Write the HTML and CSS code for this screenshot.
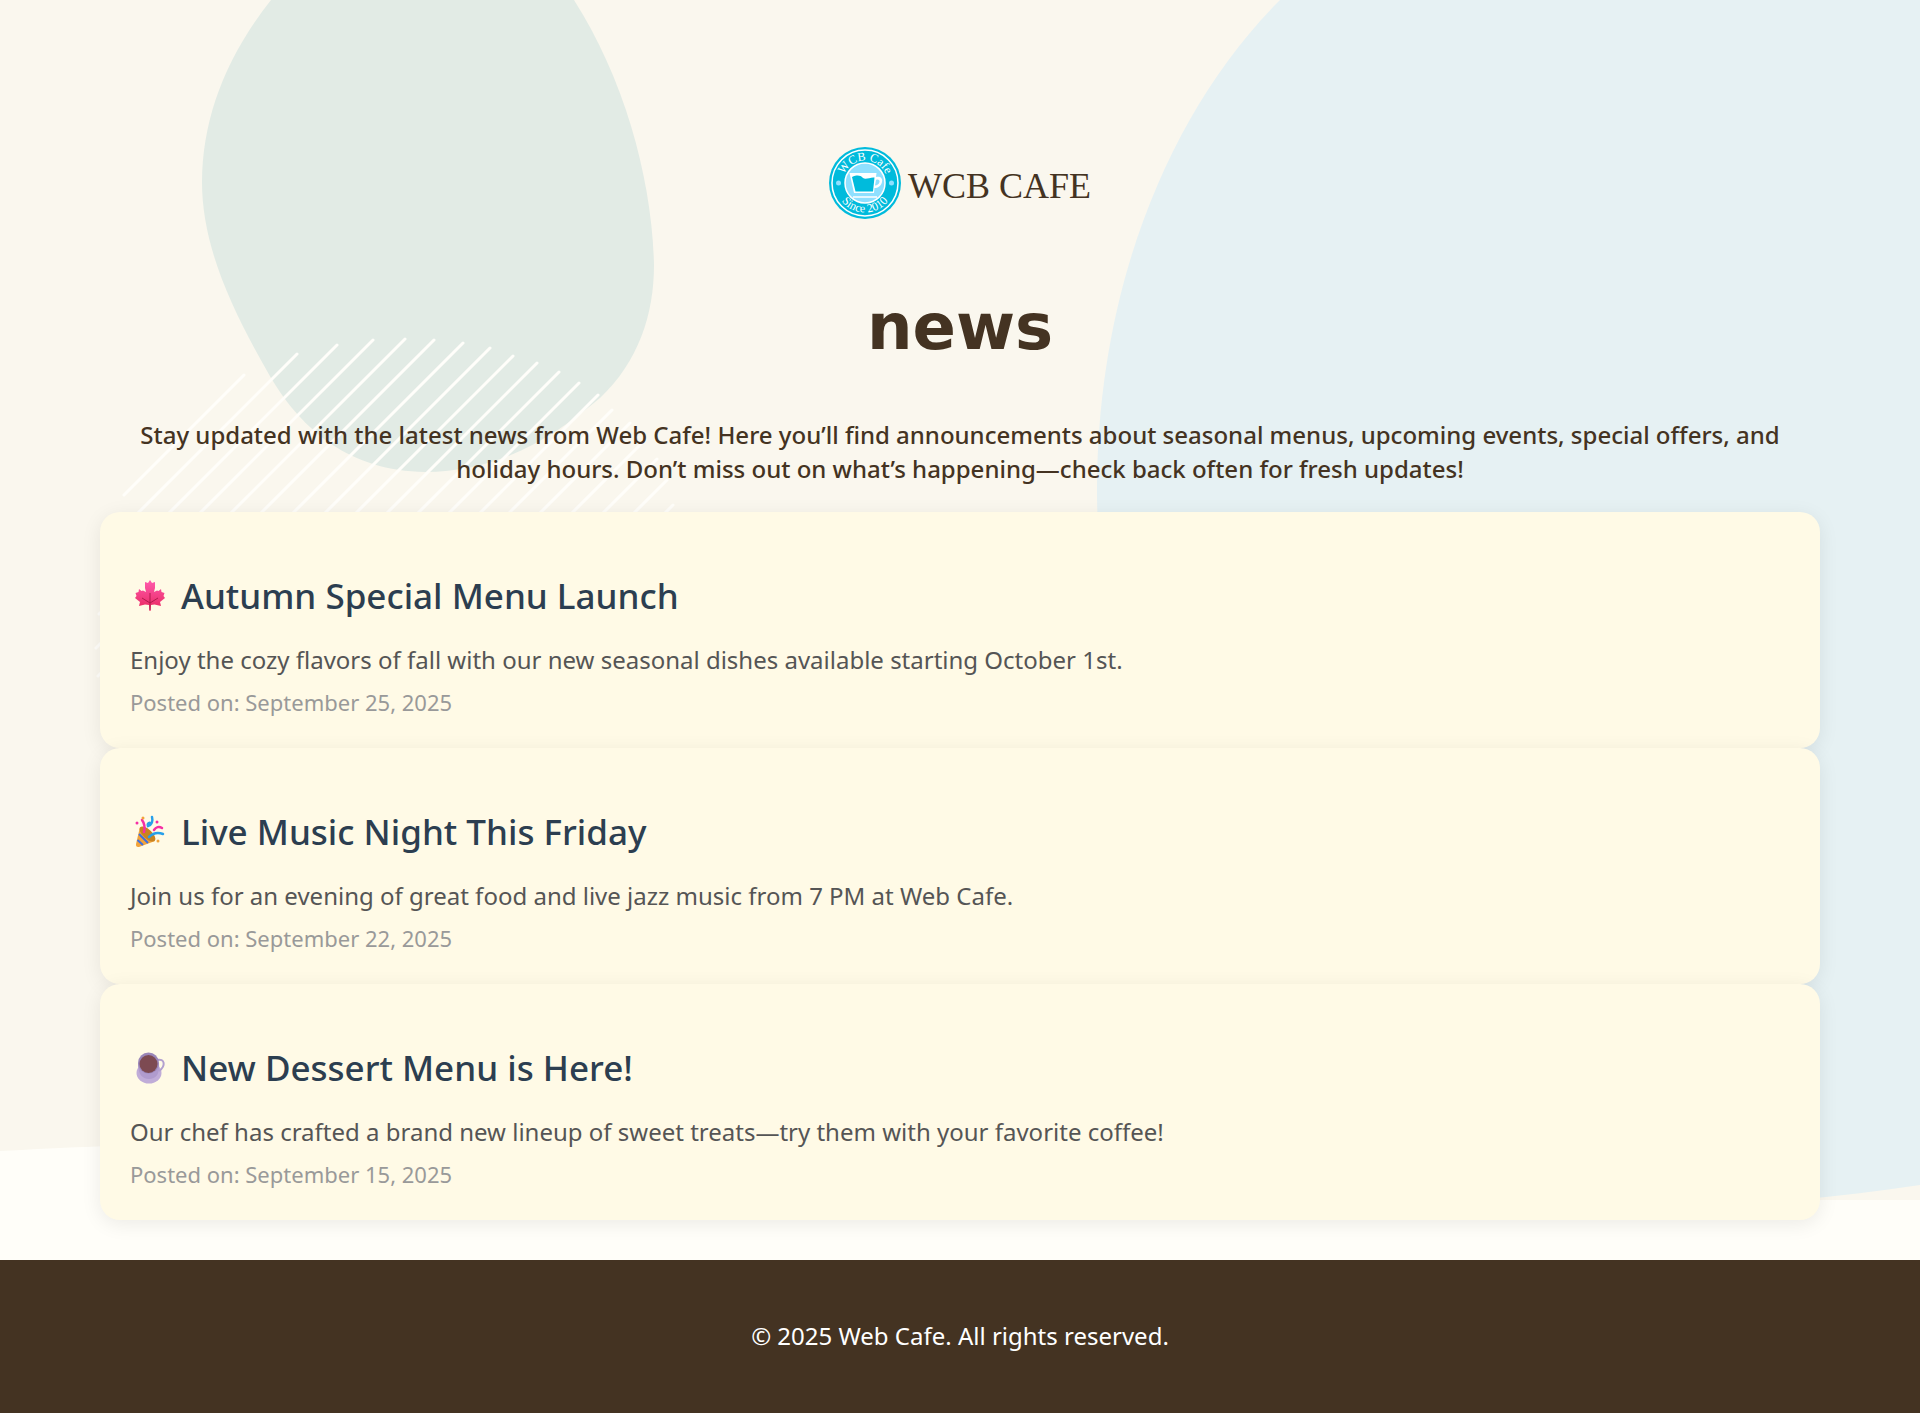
FILE: index.html
```html
<!DOCTYPE html>
<html lang="en">
<head>
<meta charset="utf-8">
<meta name="viewport" content="width=device-width, initial-scale=1">
<title>News | WCB Cafe</title>
<link rel="stylesheet" href="styles.css">
</head>
<body>
<svg class="backdrop" viewBox="0 0 1920 1200" preserveAspectRatio="xMidYMin slice" aria-hidden="true">
  <rect width="1920" height="1200" fill="#faf7ee"/>
  <path fill="#e6f1f3" d="M1280 0C1168 112 1097 290 1097 490C1097 800 1300 1200 1700 1204C1790 1203 1850 1195 1920 1185V0Z"/>
  <path fill="#e2ebe5" d="M271 0C225 58 202 120 202 182C202 250 235 315 271 378C302 430 350 471 425 472C500 472 555 436 600 398C638 362 654 315 654 265C652 180 625 80 574 0Z"/>
  <path fill="none" stroke="#fffefa" stroke-width="3" stroke-linecap="round" d="M244 375L124 495M297 354L110 541M337 345L102 580M373 340L99 614M405 339L96 648M434 340L98 676M463 343L110 696M490 348L130 708M513 356L150 719M537 363L170 730M559 372L190 741M579 383L210 752M598 395L235 758M612 410L262 760M630 423L300 753M645 440L340 745M657 459L380 736M667 480L420 727M673 505L460 718"/>
  <path fill="#fffef9" d="M0 1151C60 1148 110 1145 180 1145C500 1145 900 1200 1200 1200H0Z"/>
</svg>

<header class="site-header">
  <a class="logo" href="#" aria-label="WCB Cafe home">
    <svg class="logo-mark" viewBox="0 0 72 72" aria-hidden="true">
      <defs>
        <path id="arc-top" d="M13.500 36A22.500 22.500 0 0 1 58.500 36"/>
        <path id="arc-bottom" d="M6.500 36A29.500 29.500 0 0 0 65.500 36"/>
      </defs>
      <circle cx="36" cy="36" r="36" fill="#00bbdc"/>
      <circle cx="36" cy="36" r="33" fill="none" stroke="#fff" stroke-width="1.500"/>
      <circle cx="36" cy="36" r="20" fill="#8fe0ff" stroke="#fff" stroke-width="1.500"/>
      <circle cx="9.500" cy="36" r="2.500" fill="#8fe0ff"/>
      <circle cx="62.500" cy="36" r="2.500" fill="#8fe0ff"/>
      <path fill="#fff" d="M20.500 26H47.500L47 30C51 29 54 31 53 35C52 39 49 41 45.500 41L45 46H25Z"/>
      <path fill="#8fe0ff" d="M47 33C49 32 51 33 50.500 35C50 37 48 38.500 46 38.500Z"/>
      <path fill="#00bbdc" d="M23 30C28 28 31 28 34 31C37 33 41 30 45.500 30.500L44 44.500H26.500Z"/>
      <path stroke="#fff" stroke-width="1.500" d="M24 50H48"/>
      <text class="badge-text"><textPath href="#arc-top" startOffset="50%">WCB Cafe</textPath></text>
      <text class="badge-text"><textPath href="#arc-bottom" startOffset="50%">Since 2010</textPath></text>
    </svg>
    <span class="logo-name">WCB CAFE</span>
  </a>
</header>

<main class="page">
  <h1 class="page-title">news</h1>
  <p class="intro">Stay updated with the latest news from Web Cafe! Here you’ll find announcements about seasonal menus, upcoming events, special offers, and holiday hours. Don’t miss out on what’s happening—check back often for fresh updates!</p>

  <article class="card">
    <h2 class="card-title">
      <svg class="icon" viewBox="0 0 34 34" aria-hidden="true">
        <defs><linearGradient id="leaf" x1="0" y1="0" x2="0" y2="1"><stop offset="0" stop-color="#ff5cb0"/><stop offset="1" stop-color="#e8265c"/></linearGradient></defs>
        <path fill="url(#leaf)" d="M17 1L19 4L22 3L22 9L21 13L24 11.500L25.500 12L28 10L28.500 13L31.500 14L30.500 17L32 19L27 23L28 27L21.500 25.500L18 26L17.500 32H16.500L16 26L12 25.500L6 27L7 23L2 19L3.500 17L2.500 14L5.500 13L6 10L8.500 12L10 11.500L13 13L12 9L12 3L15 4Z"/>
        <path fill="none" stroke="#b01a4c" d="M17 14V31M17 24L9 19M17 24L25 19"/>
      </svg>
      <span>Autumn Special Menu Launch</span>
    </h2>
    <p class="card-text">Enjoy the cozy flavors of fall with our new seasonal dishes available starting October 1st.</p>
    <p class="card-date">Posted on: <time datetime="2025-09-25">September 25, 2025</time></p>
  </article>

  <article class="card">
    <h2 class="card-title">
      <svg class="icon" viewBox="0 0 34 34" aria-hidden="true">
        <path fill="#f2a33a" d="M7 12L22 26L6 32Q2.500 32.500 3 29Z"/>
        <path fill="none" stroke="#3f6fe0" stroke-width="2" d="M6 19L15 28M4.500 25L10 30"/>
        <ellipse cx="14.500" cy="19" rx="10" ry="4.500" transform="rotate(43 14.500 19)" fill="#c98320"/>
        <path fill="none" stroke="#f52fa5" stroke-width="2.500" stroke-linecap="round" d="M9 5C12 9 12 13 11 17M21 15C23 12 26 11 29 13"/>
        <path fill="none" stroke="#28a0ea" stroke-width="2.500" stroke-linecap="round" d="M19 2C20 6 19 10 15 11C14 8 17 7 18 9M16 22C20 18 25 17 30 19"/>
        <g fill="#f52fa5"><circle cx="4" cy="8" r="1.500"/><circle cx="24" cy="7" r="1.500"/></g>
        <g fill="#f2a33a"><circle cx="10" cy="3" r="1.500"/><circle cx="25" cy="26" r="1.500"/></g>
      </svg>
      <span>Live Music Night This Friday</span>
    </h2>
    <p class="card-text">Join us for an evening of great food and live jazz music from 7 PM at Web Cafe.</p>
    <p class="card-date">Posted on: <time datetime="2025-09-22">September 22, 2025</time></p>
  </article>

  <article class="card">
    <h2 class="card-title">
      <svg class="icon" viewBox="0 0 34 34" aria-hidden="true">
        <ellipse cx="16" cy="22" rx="12.500" ry="10.500" fill="#c0acd8"/>
        <path fill="none" stroke="#b3a0cf" stroke-width="2" d="M24 9C32 7 33 15 26 20"/>
        <path fill="#b09bcd" d="M5 12C5 23 9 28 16 28C23 28 27 23 26 12Z"/>
        <ellipse cx="15.500" cy="12" rx="10.500" ry="10.500" fill="#9a86b8"/>
        <ellipse cx="15.500" cy="13" rx="9" ry="9" fill="#7d4a52"/>
      </svg>
      <span>New Dessert Menu is Here!</span>
    </h2>
    <p class="card-text">Our chef has crafted a brand new lineup of sweet treats—try them with your favorite coffee!</p>
    <p class="card-date">Posted on: <time datetime="2025-09-15">September 15, 2025</time></p>
  </article>
</main>

<footer class="site-footer">
  <p class="copyright">© 2025 Web Cafe. All rights reserved.</p>
</footer>
</body>
</html>
```
FILE: styles.css
```css
*, *::before, *::after {
  box-sizing: border-box;
}

body {
  position: relative;
  margin: 0;
  background: #fffef9;
  color: #432;
  font-family: "Noto Sans", "Open Sans", sans-serif;
  font-size: 24px;
  line-height: 34px;
}

h1, h2, p {
  margin: 0;
}

.backdrop {
  position: absolute;
  top: 0;
  left: 0;
  z-index: -1;
  width: 100%;
  height: 1200px;
}

.site-header {
  display: flex;
  justify-content: center;
  padding: 147px 24px 60px;
}

.logo {
  display: flex;
  align-items: center;
  gap: 7px;
  color: #432;
  text-decoration: none;
}

.logo-mark {
  width: 72px;
  height: 72px;
}

.badge-text {
  fill: #fff;
  font-family: "Liberation Serif", serif;
  font-size: 12px;
  text-anchor: middle;
}

.logo-name {
  padding-top: 6px;
  font-family: "Liberation Serif", serif;
  font-size: 36px;
  line-height: 40px;
}

.page {
  margin: 0 100px;
  padding-bottom: 40px;
}

.page-title {
  margin-bottom: 43px;
  font-family: "DejaVu Sans", sans-serif;
  font-size: 64px;
  font-weight: 700;
  line-height: 96px;
  text-align: center;
}

.intro {
  margin-bottom: 26px;
  padding: 0 24px;
  font-weight: 500;
  text-align: center;
}

.card {
  padding: 59px 30px 29px;
  border-radius: 20px;
  background: #fffae6;
  box-shadow: 0 4px 20px rgba(0, 0, 0, 0.08);
}

.card-title {
  display: flex;
  align-items: center;
  gap: 14px;
  margin-bottom: 22px;
  padding-left: 3px;
  color: #2c3e50;
  font-size: 35px;
  font-weight: 500;
  line-height: 50px;
}

.icon {
  width: 34px;
  height: 34px;
}

.card-text {
  color: #555;
}

.card-date {
  margin-top: 8px;
  color: #999;
  font-size: 22px;
}

.site-footer {
  padding: 59px 24px 60px;
  background: #432;
  color: #fff;
  text-align: center;
}
```
